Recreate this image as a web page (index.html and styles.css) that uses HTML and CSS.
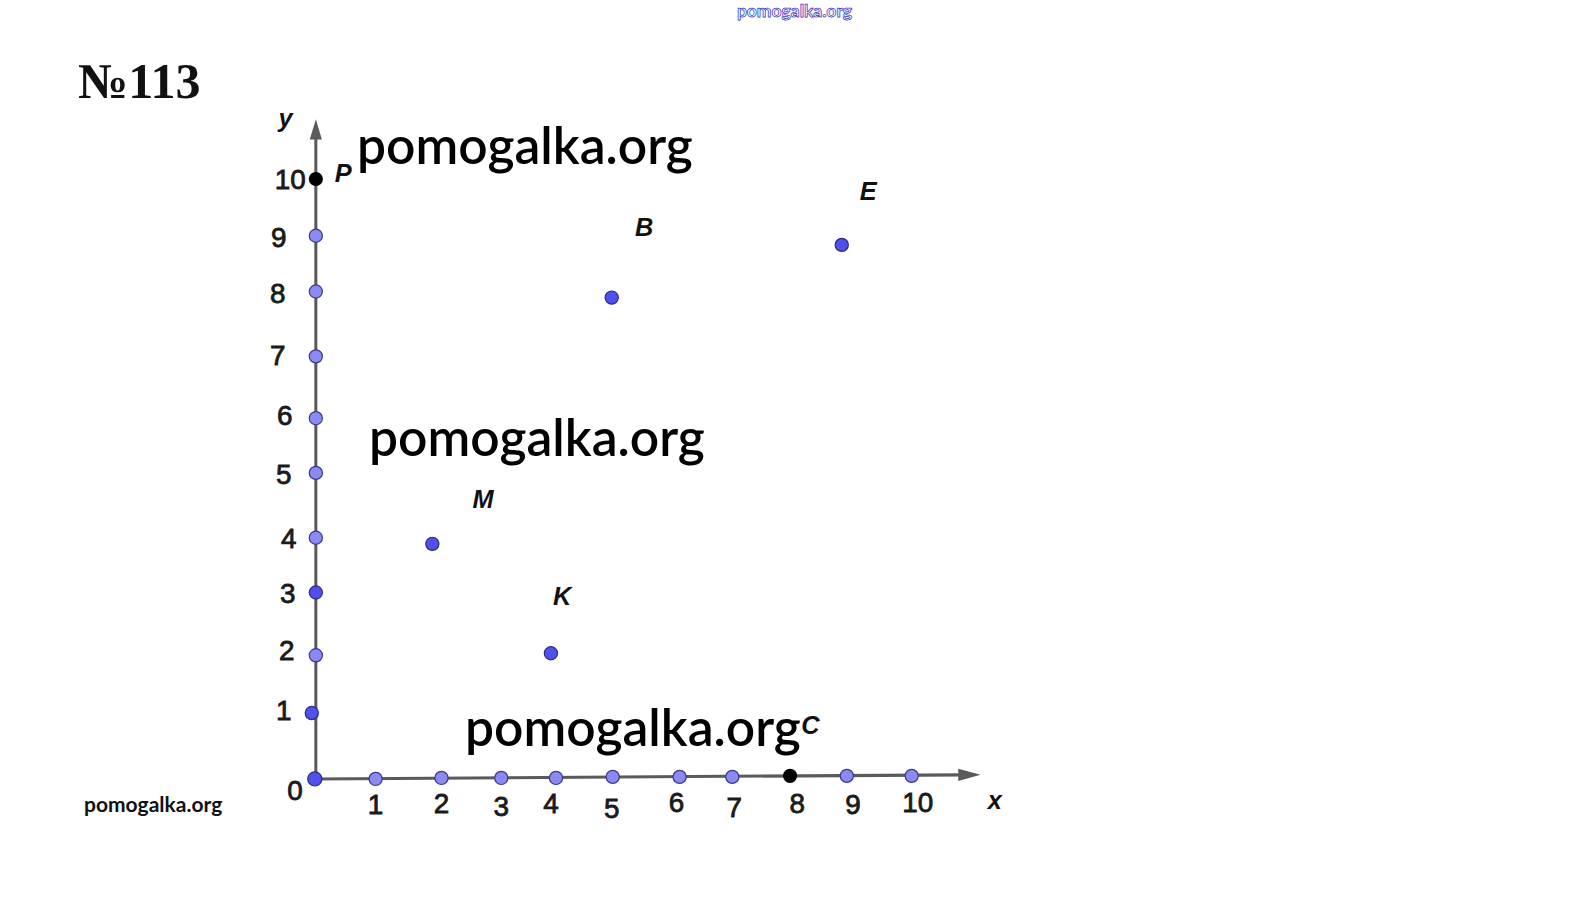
FILE: index.html
```html
<!DOCTYPE html>
<html>
<head>
<meta charset="utf-8">
<link rel="stylesheet" href="styles.css">
</head>
<body>
<div class="page">
  <header class="top-mark">pomogalka.org</header>
  <h1 class="title">№113</h1>
  <svg class="graph" viewBox="250 100 750 720" width="760" height="729.6" xmlns="http://www.w3.org/2000/svg">
    <g class="axes">
      <line x1="312" y1="770" x2="312" y2="135" />
      <polygon points="312,118 306,138 318,138" />
      <line x1="311" y1="769" x2="950" y2="765" />
      <polygon points="968,765 946,759 946,771" />
    </g>
    <g class="ticks">
      <circle cx="312" cy="233" r="6.5"/>
      <circle cx="312" cy="288" r="6.5"/>
      <circle cx="312" cy="352" r="6.5"/>
      <circle cx="312" cy="413" r="6.5"/>
      <circle cx="312" cy="467" r="6.5"/>
      <circle cx="312" cy="531" r="6.5"/>
      <circle cx="312" cy="647" r="6.5"/>
      <circle cx="371" cy="769" r="6.5"/>
      <circle cx="436" cy="768" r="6.5"/>
      <circle cx="495" cy="768" r="6.5"/>
      <circle cx="549" cy="768" r="6.5"/>
      <circle cx="605" cy="767" r="6.5"/>
      <circle cx="671" cy="767" r="6.5"/>
      <circle cx="723" cy="767" r="6.5"/>
      <circle cx="836" cy="766" r="6.5"/>
      <circle cx="900" cy="766" r="6.5"/>
    </g>
    <g class="pts">
      <circle cx="312" cy="585" r="6.5"/>
      <circle cx="308" cy="704" r="6.5"/>
      <circle cx="311" cy="769" r="7"/>
      <circle cx="604" cy="294" r="6.5"/>
      <circle cx="831" cy="242" r="6.5"/>
      <circle cx="427" cy="537" r="6.5"/>
      <circle cx="544" cy="645" r="6.5"/>
    </g>
    <g class="black">
      <circle cx="312" cy="177" r="7"/>
      <circle cx="780" cy="766" r="7"/>
    </g>
    <g class="nums">
      <text x="302" y="187" text-anchor="end">10</text>
      <text x="283" y="244" text-anchor="end">9</text>
      <text x="282" y="299" text-anchor="end">8</text>
      <text x="282" y="361" text-anchor="end">7</text>
      <text x="289" y="420" text-anchor="end">6</text>
      <text x="288" y="478" text-anchor="end">5</text>
      <text x="293" y="541" text-anchor="end">4</text>
      <text x="292" y="595" text-anchor="end">3</text>
      <text x="291" y="652" text-anchor="end">2</text>
      <text x="288" y="711" text-anchor="end">1</text>
      <text x="299" y="790" text-anchor="end">0</text>
      <text x="371" y="804" text-anchor="middle">1</text>
      <text x="436" y="803" text-anchor="middle">2</text>
      <text x="495" y="806" text-anchor="middle">3</text>
      <text x="544" y="803" text-anchor="middle">4</text>
      <text x="604" y="808" text-anchor="middle">5</text>
      <text x="668" y="802" text-anchor="middle">6</text>
      <text x="725" y="807" text-anchor="middle">7</text>
      <text x="787" y="803" text-anchor="middle">8</text>
      <text x="842" y="804" text-anchor="middle">9</text>
      <text x="906" y="802" text-anchor="middle">10</text>
    </g>
    <g class="labels">
      <text x="282" y="126" text-anchor="middle">y</text>
      <text x="982" y="799" text-anchor="middle">x</text>
      <text x="339" y="180" text-anchor="middle">P</text>
      <text x="636" y="233" text-anchor="middle">B</text>
      <text x="857" y="198" text-anchor="middle">E</text>
      <text x="477" y="502" text-anchor="middle">M</text>
      <text x="555" y="597" text-anchor="middle">K</text>
      <text x="800" y="725" text-anchor="middle">C</text>
    </g>
  </svg>
  <div class="mark mark-1">pomogalka.org</div>
  <div class="mark mark-2">pomogalka.org</div>
  <div class="mark mark-3">pomogalka.org</div>
  <div class="mark-small">pomogalka.org</div>
</div>
</body>
</html>
```

FILE: styles.css
```css
html, body {
  margin: 0;
  padding: 0;
  background: #ffffff;
}

.page {
  position: relative;
  width: 1589px;
  height: 918px;
  display: flex;
  flex-direction: column;
  align-items: flex-start;
}

.top-mark {
  align-self: stretch;
  text-align: center;
  font-family: Lato, "Noto Sans", sans-serif;
  font-weight: bold;
  font-size: 17.5px;
  line-height: 22px;
  height: 22px;
  color: #ffffff;
  -webkit-text-stroke: 0.75px #3030c0;
}

.title {
  margin: 39px 0 0 78px;
  font-family: "Liberation Serif", "Times New Roman", serif;
  font-weight: bold;
  font-size: 50px;
  line-height: 40px;
  height: 40px;
  color: #111111;
}

.graph {
  display: block;
  margin-left: 253.35px;
  margin-top: 0.34px;
}

.axes line {
  stroke: #5a5a5a;
  stroke-width: 3;
}

.axes polygon {
  fill: #5a5a5a;
}

.ticks circle {
  fill: #8a8af2;
  stroke: #3a3a90;
  stroke-width: 1.2;
}

.pts circle {
  fill: #5050ea;
  stroke: #2c2c80;
  stroke-width: 1.2;
}

.black circle {
  fill: #000000;
}

.nums text {
  font-family: "Liberation Sans", Arial, sans-serif;
  font-size: 27.5px;
  fill: #1a1a1a;
  stroke: #1a1a1a;
  stroke-width: 0.8;
}

.labels text {
  font-family: "Liberation Sans", Arial, sans-serif;
  font-size: 25px;
  font-style: italic;
  font-weight: bold;
  fill: #111111;
}

.mark {
  position: absolute;
  font-family: Lato, "Noto Sans", sans-serif;
  font-weight: 600;
  font-size: 51.5px;
  line-height: 52px;
  color: #000000;
  white-space: nowrap;
}

.mark-1 { left: 357px; top: 118px; }
.mark-2 { left: 369px; top: 410px; }
.mark-3 { left: 465px; top: 700px; }

.mark-small {
  position: absolute;
  left: 84px;
  top: 791px;
  font-family: Lato, "Noto Sans", sans-serif;
  font-weight: bold;
  font-size: 21px;
  line-height: 26px;
  color: #111111;
}
```
